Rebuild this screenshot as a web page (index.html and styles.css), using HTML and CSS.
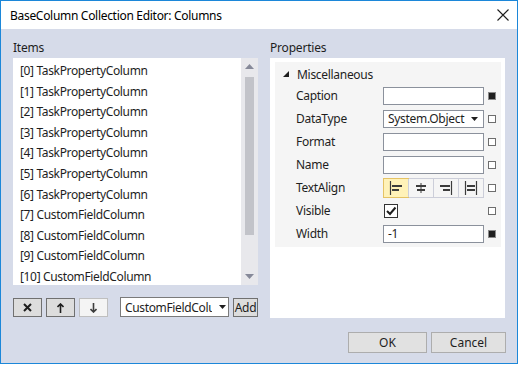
FILE: index.html
```html
<!DOCTYPE html>
<html lang="en">
<head>
    <meta charset="UTF-8">
    <title>BaseColumn Collection Editor: Columns</title>
    <link rel="stylesheet" href="styles.css">
</head>
<body>
    <div class="window">
        <div class="titlebar">
            <span class="title">BaseColumn Collection Editor: Columns</span>
            <svg class="close" width="12" height="12" viewBox="0 0 12 12">
                <path d="M0.5 0.5 L11.5 11.5 M11.5 0.5 L0.5 11.5" stroke="#1e1e1e" stroke-width="1.1" fill="none"/>
            </svg>
        </div>

        <div class="content">
            <div class="columns">
                <!-- left side: the item list -->
                <section class="items-pane">
                    <div class="pane-label">Items</div>
                    <div class="listbox">
                        <ul class="item-list">
                            <li>[0] TaskPropertyColumn</li>
                            <li>[1] TaskPropertyColumn</li>
                            <li>[2] TaskPropertyColumn</li>
                            <li>[3] TaskPropertyColumn</li>
                            <li>[4] TaskPropertyColumn</li>
                            <li>[5] TaskPropertyColumn</li>
                            <li>[6] TaskPropertyColumn</li>
                            <li>[7] CustomFieldColumn</li>
                            <li>[8] CustomFieldColumn</li>
                            <li>[9] CustomFieldColumn</li>
                            <li>[10] CustomFieldColumn</li>
                        </ul>
                        <div class="scrollbar">
                            <svg class="scroll-arrow" width="9" height="5" viewBox="0 0 9 5"><path d="M0 5 L4.5 0 L9 5 Z" fill="#868999"/></svg>
                            <div class="scroll-track"><div class="scroll-thumb"></div></div>
                            <svg class="scroll-arrow" width="9" height="5" viewBox="0 0 9 5"><path d="M0 0 L4.5 5 L9 0 Z" fill="#868999"/></svg>
                        </div>
                    </div>
                    <div class="list-tools">
                        <button class="tool-btn" type="button">
                            <svg width="9" height="9" viewBox="0 0 9 9"><path d="M1 1 L8 8 M8 1 L1 8" stroke="#1e1e1e" stroke-width="2" fill="none"/></svg>
                        </button>
                        <button class="tool-btn" type="button">
                            <svg width="7" height="10" viewBox="0 0 7 10"><path d="M3.5 10 V2 M0.5 4 L3.5 1 L6.5 4" stroke="#1e1e1e" stroke-width="1.6" fill="none"/></svg>
                        </button>
                        <button class="tool-btn disabled" type="button">
                            <svg width="7" height="10" viewBox="0 0 7 10"><path d="M3.5 0 V8 M0.5 6 L3.5 9 L6.5 6" stroke="#1e1e1e" stroke-width="1.6" fill="none"/></svg>
                        </button>
                        <div class="combo">
                            <span class="combo-text">CustomFieldColumn</span>
                            <svg class="combo-arrow" width="7" height="4" viewBox="0 0 7 4"><path d="M0 0 L3.5 4 L7 0 Z" fill="#1e1e1e"/></svg>
                        </div>
                        <button class="add-btn" type="button">Add</button>
                    </div>
                </section>

                <!-- right side: the property grid -->
                <section class="props-pane">
                    <div class="pane-label">Properties</div>
                    <div class="prop-grid">
                        <div class="prop-inner">
                            <div class="category">
                                <svg width="6" height="6" viewBox="0 0 6 6"><path d="M6 0 V6 H0 Z" fill="#1e1e1e"/></svg>
                                <span>Miscellaneous</span>
                            </div>
                            <div class="prop-row">
                                <span class="prop-name">Caption</span>
                                <div class="prop-box"></div>
                                <span class="marker set"></span>
                            </div>
                            <div class="prop-row">
                                <span class="prop-name">DataType</span>
                                <div class="prop-box select">
                                    <span>System.Object</span>
                                    <svg width="7" height="4" viewBox="0 0 7 4"><path d="M0 0 L3.5 4 L7 0 Z" fill="#1e1e1e"/></svg>
                                </div>
                                <span class="marker"></span>
                            </div>
                            <div class="prop-row">
                                <span class="prop-name">Format</span>
                                <div class="prop-box"></div>
                                <span class="marker"></span>
                            </div>
                            <div class="prop-row">
                                <span class="prop-name">Name</span>
                                <div class="prop-box"></div>
                                <span class="marker"></span>
                            </div>
                            <div class="prop-row">
                                <span class="prop-name">TextAlign</span>
                                <div class="align-group">
                                    <span class="align-btn selected">
                                        <svg width="14" height="14" viewBox="0 0 14 14"><path d="M1.5 0 V14" stroke="#3c3c3c" stroke-width="1.2"/><path d="M3 5 H13 M3 9 H10" stroke="#3c3c3c" stroke-width="2"/></svg>
                                    </span>
                                    <span class="align-btn">
                                        <svg width="14" height="14" viewBox="0 0 14 14"><path d="M7 2 V12" stroke="#3c3c3c" stroke-width="1"/><path d="M2 5 H12 M3 9 H11" stroke="#3c3c3c" stroke-width="2"/></svg>
                                    </span>
                                    <span class="align-btn">
                                        <svg width="14" height="14" viewBox="0 0 14 14"><path d="M12.5 0 V14" stroke="#3c3c3c" stroke-width="1.2"/><path d="M1 5 H11 M4 9 H11" stroke="#3c3c3c" stroke-width="2"/></svg>
                                    </span>
                                    <span class="align-btn">
                                        <svg width="14" height="14" viewBox="0 0 14 14"><path d="M1.5 0 V14 M12.5 0 V14" stroke="#3c3c3c" stroke-width="1.2"/><path d="M3 5 H11 M3 9 H11" stroke="#3c3c3c" stroke-width="2"/></svg>
                                    </span>
                                </div>
                                <span class="marker"></span>
                            </div>
                            <div class="prop-row">
                                <span class="prop-name">Visible</span>
                                <div class="check-cell">
                                    <span class="checkbox">
                                        <svg width="12" height="12" viewBox="0 0 12 12"><path d="M2 6 L5 9 L10.5 2.5" stroke="#1e1e1e" stroke-width="2" fill="none"/></svg>
                                    </span>
                                </div>
                                <span class="marker"></span>
                            </div>
                            <div class="prop-row">
                                <span class="prop-name">Width</span>
                                <div class="prop-box"><span>-1</span></div>
                                <span class="marker set"></span>
                            </div>
                        </div>
                    </div>
                </section>
            </div>

            <div class="dialog-buttons">
                <button class="dlg-btn ok" type="button">OK</button>
                <button class="dlg-btn cancel" type="button">Cancel</button>
            </div>
        </div>
    </div>
</body>
</html>
```

FILE: styles.css
```css
* {
    box-sizing: border-box;
}

body {
    margin: 0;
    background-color: #fff;
    font-family: "Noto Sans", "Open Sans", sans-serif;
    font-size: 12px;
    color: #1e1e1e;
}

.window {
    width: 518px;
    height: 364px;
    border: 1px solid #1c87d9;
    background-color: #d6dbe9;
}

.titlebar {
    height: 28px;
    background-color: #fff;
    display: flex;
    align-items: center;
    justify-content: space-between;
    padding: 0 8px 0 9px;
}

.title {
    font-size: 12px;
    color: #000;
    letter-spacing: -0.3px;
}

.content {
    padding: 0 12px 10px 12px;
}

.columns {
    display: grid;
    grid-template-columns: 245px 235px;
    column-gap: 12px;
}

.pane-label {
    height: 29px;
    padding-top: 11px;
    line-height: 16px;
    letter-spacing: -0.2px;
}

/* list box */
.listbox {
    height: 227px;
    background-color: #fff;
    display: flex;
}

.item-list {
    flex: 1;
    list-style: none;
    margin: 0;
    padding: 3px 0 0 7px;
}

.item-list li {
    height: 20.6px;
    line-height: 20.6px;
    letter-spacing: -0.35px;
    white-space: nowrap;
}

.scrollbar {
    width: 17px;
    background-color: #e8e8ec;
    display: flex;
    flex-direction: column;
    align-items: center;
    padding: 6px 0 6px 0;
}

.scroll-track {
    flex: 1;
    width: 100%;
    padding: 8px 4px 39px 4px;
}

.scroll-thumb {
    height: 100%;
    background-color: #c2c3c9;
}

.list-tools {
    margin-top: 13px;
    height: 19px;
    display: flex;
}

.tool-btn {
    width: 29px;
    height: 19px;
    margin-right: 4px;
    padding: 0;
    border: 1px solid #707070;
    background-color: #dddddd;
    display: flex;
    align-items: center;
    justify-content: center;
}

.tool-btn.disabled {
    border-color: #bfbfbf;
    background-color: #f4f4f4;
}

.tool-btn.disabled svg {
    opacity: 0.85;
}

.combo {
    width: 109px;
    height: 20px;
    margin-left: 8px;
    margin-top: -1px;
    background-color: #fff;
    border: 1px solid #7a7a7a;
    display: flex;
    align-items: center;
    padding-left: 4px;
    overflow: hidden;
}

.combo-text {
    width: 87px;
    overflow: hidden;
    white-space: nowrap;
    letter-spacing: -0.35px;
}

.combo-arrow {
    margin-left: 7px;
}

.add-btn {
    width: 25px;
    height: 19px;
    margin-left: 4px;
    padding: 0;
    border: 1px solid #707070;
    background-color: #dddddd;
    font-family: inherit;
    font-size: 12px;
    color: #1e1e1e;
    letter-spacing: -0.3px;
}

/* property grid */
.prop-grid {
    height: 260px;
    background-color: #fff;
    padding: 4px 4px 4px 5px;
}

.prop-inner {
    background-color: #f5f5f5;
    padding-bottom: 2px;
}

.category {
    height: 22px;
    display: flex;
    align-items: center;
    padding-left: 8px;
    padding-top: 2px;
    letter-spacing: -0.3px;
}

.category svg {
    margin-right: 8px;
}

.prop-row {
    height: 23px;
    display: grid;
    grid-template-columns: 104px 101px 8px;
    column-gap: 4px;
    align-items: center;
}

.prop-name {
    padding-left: 21px;
    letter-spacing: -0.3px;
}

.prop-box {
    height: 18px;
    background-color: #fff;
    border: 1px solid #8b919c;
    display: flex;
    align-items: center;
    justify-content: space-between;
    padding: 0 5px 0 4px;
    letter-spacing: -0.3px;
}

.marker {
    width: 8px;
    height: 8px;
    border: 1px solid #6e6e6e;
    background-color: #fff;
}

.marker.set {
    background-color: #1e1e1e;
    border-color: #8a8a8a;
}

.align-group {
    height: 20px;
    display: flex;
    border: 1px solid #ccced9;
}

.align-btn {
    flex: 1;
    display: flex;
    align-items: center;
    justify-content: center;
    border-left: 1px solid #ccced9;
}

.align-btn:first-child {
    border-left: none;
}

.align-btn.selected {
    background-color: #fff2b8;
    outline: 1px solid #e5c365;
}

.check-cell {
    display: flex;
    align-items: center;
}

.checkbox {
    width: 14px;
    height: 14px;
    margin-left: 1px;
    border: 1px solid #333;
    background-color: #fff;
    display: flex;
    align-items: center;
    justify-content: center;
}

/* OK / Cancel */
.dialog-buttons {
    margin-top: 14px;
    display: flex;
    justify-content: flex-end;
    margin-right: -1px;
}

.dlg-btn {
    height: 21px;
    padding: 0;
    border: 1px solid #adadad;
    background-color: #e1e1e1;
    font-family: inherit;
    font-size: 12px;
    color: #1e1e1e;
}

.dlg-btn.ok {
    width: 79px;
}

.dlg-btn.cancel {
    width: 75px;
    margin-left: 4px;
}
```
